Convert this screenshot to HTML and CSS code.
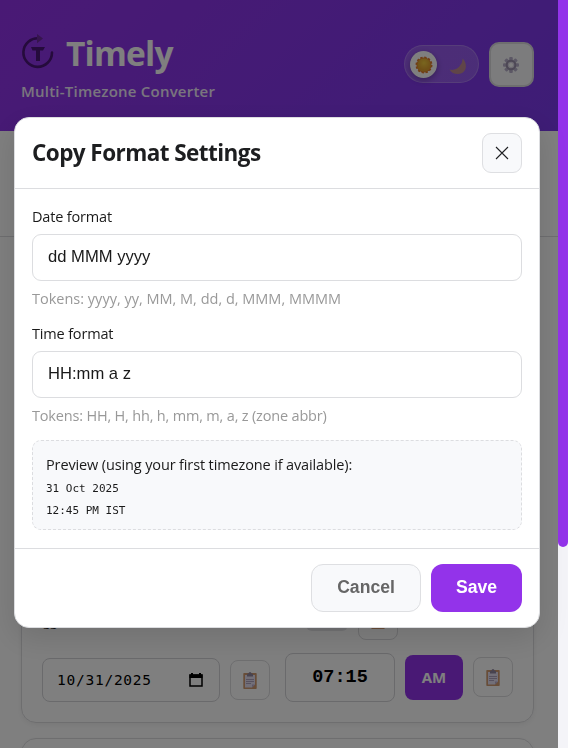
FILE: index.html
```html
<!DOCTYPE html>
<html lang="en">
<head>
<meta charset="utf-8">
<title>Timely</title>
<link rel="stylesheet" href="styles.css">
</head>
<body>
<svg width="0" height="0" class="defs">
  <defs>
    <symbol id="clipboard" viewBox="0 0 14 17">
      <rect x="0.3" y="1" width="13.4" height="16" rx="0.8" fill="#d09a70"/>
      <path d="M2 3h10v9.5L9 15.500H2z" fill="#e4def0"/>
      <path d="M12 12.500L9 15.500V12.500z" fill="#b9adcf"/>
      <path d="M4 4.500V2.500Q4 1.500 5.500 1.500Q5.700 0 7 0T8.500 1.500Q10 1.500 10 2.500V4.500z" fill="#91869f"/>
      <path d="M3 7.500h8M3 9.500h8M3 11.500h5" stroke="#a79bb8" stroke-width="0.9"/>
    </symbol>
  </defs>
</svg>
<div class="viewport">
  <div class="page">
    <header class="topbar">
      <div class="brand">
        <div class="brand-row">
          <svg class="logo" width="34" height="36" viewBox="0 0 34 36" fill="none">
            <path d="M18 5.300A14.300 14.300 0 1 0 31 19.500" stroke="#4a1678" stroke-width="2.600" stroke-linecap="round"/>
            <path d="M16 1L22 5.500L16 10.300z" fill="#6c2b9c"/>
            <path d="M10 14h14l-2 3.500H19V28h-4V17.500h-3.500z" fill="#4a1678"/>
          </svg>
          <h1 class="name">Timely</h1>
        </div>
        <p class="tagline">Multi-Timezone Converter</p>
      </div>
      <div class="actions">
        <div class="theme">
          <span class="knob">
            <svg width="18" height="18" viewBox="0 0 18 18">
              <defs><radialGradient id="sun" cx=".5" cy=".35"><stop offset="0" stop-color="#f2cc3e"/><stop offset="1" stop-color="#dfa02f"/></radialGradient></defs>
              <circle cx="9" cy="9" r="7.500" fill="#e07a2c" stroke="#e07a2c" stroke-width="2" stroke-dasharray="2.300 1.627"/>
              <circle cx="9" cy="9" r="6.800" fill="url(#sun)"/>
            </svg>
          </span>
          <svg class="moon" width="18" height="17" viewBox="0 0 18 17"><path d="M13.500.5C19 5 18 16 9 16Q3 16 .5 11.500Q6 13 10 9T13.500.5z" fill="#c08a91"/></svg>
        </div>
        <div class="gear">
          <svg width="18" height="18" viewBox="-9 -9 18 18">
            <g fill="#b9b0cb">
              <rect x="-1.800" y="-8" width="3.600" height="16" rx="1"/>
              <rect x="-1.800" y="-8" width="3.600" height="16" rx="1" transform="rotate(45)"/>
              <rect x="-1.800" y="-8" width="3.600" height="16" rx="1" transform="rotate(90)"/>
              <rect x="-1.800" y="-8" width="3.600" height="16" rx="1" transform="rotate(135)"/>
            </g>
            <circle r="4.300" fill="#ddd6e6" stroke="#9a90aa" stroke-width="2"/>
            <circle r="2" fill="#fff"/>
          </svg>
        </div>
      </div>
    </header>
    <section class="toolbar"></section>
    <main class="cards">
      <article class="card">
        <div class="zone-row">
          <span class="zone">gg</span>
          <span class="chip"></span>
          <span class="copy"><svg width="14" height="17"><use href="#clipboard"/></svg></span>
        </div>
        <div class="time-row">
          <div class="date"><span>10/31/2025</span>
            <svg width="14" height="14" viewBox="0 0 14 14"><path d="M1 2h12v11H1z" fill="none" stroke="#000" stroke-width="1.500"/><path d="M.5 1.500h13V5H.5zM2 0h2v2H2zM10 0h2v2h-2z"/></svg>
          </div>
          <span class="copy date-copy"><svg width="14" height="17"><use href="#clipboard"/></svg></span>
          <div class="time">07:15</div>
          <div class="ampm">AM</div>
          <span class="copy time-copy"><svg width="14" height="17"><use href="#clipboard"/></svg></span>
        </div>
      </article>
      <article class="card next"></article>
    </main>
  </div>
  <div class="track"><div class="thumb"></div></div>
</div>
<div class="overlay">
  <div class="modal">
    <div class="modal-head">
      <h2>Copy Format Settings</h2>
      <button class="close"><svg width="14" height="14" viewBox="0 0 14 14"><path d="M1 1l12 12M13 1L1 13" stroke="#1f2023" stroke-width="1.100"/></svg></button>
    </div>
    <div class="modal-body">
      <label class="label">Date format</label>
      <div class="input">dd MMM yyyy</div>
      <div class="hint">Tokens: yyyy, yy, MM, M, dd, d, MMM, MMMM</div>
      <label class="label">Time format</label>
      <div class="input">HH:mm a z</div>
      <div class="hint time-hint">Tokens: HH, H, hh, h, mm, m, a, z (zone abbr)</div>
      <div class="preview">
        <div class="preview-title">Preview (using your first timezone if available):</div>
        <div class="mono">31 Oct 2025</div>
        <div class="mono">12:45 PM IST</div>
      </div>
    </div>
    <div class="modal-foot">
      <button class="btn cancel">Cancel</button>
      <button class="btn save">Save</button>
    </div>
  </div>
</div>
</body>
</html>
```
FILE: styles.css
```css
* { box-sizing: border-box; }
body { margin: 0; height: 748px; overflow: hidden; font-family: "Open Sans", "Noto Sans", sans-serif; color: #1a1a1a; }
.defs { position: absolute; }
h1, h2, p { margin: 0; }
svg { display: block; flex: none; }
.viewport { display: flex; height: 748px; }
.page { width: 558px; height: 748px; overflow: hidden; background: #fefefe; }
.track { width: 10px; background: #f4f4f8; }
.thumb { height: 547px; border-radius: 0 0 5px 5px; background: #9333ea; }

.topbar { height: 131px; padding: 31px 24px 0 21px; display: flex; justify-content: space-between; background: linear-gradient(135deg, #9333ea, #7c3aed); color: #fff; }
.brand-row { display: flex; align-items: center; height: 44px; gap: 11px; }
.logo { margin-top: -4px; }
.name { font-size: 33.500px; line-height: 44px; font-weight: 700; letter-spacing: -0.8px; }
.tagline { margin-top: 5px; font-size: 15px; line-height: 22px; font-weight: 600; opacity: .9; letter-spacing: 0.22px; }
.actions { display: flex; gap: 10px; padding-top: 11px; }
.theme { margin-top: 3px; width: 75px; height: 38px; border: 1px solid rgba(255,255,255,.2); border-radius: 19px; background: rgba(255,255,255,.18); display: flex; align-items: center; padding: 0 5px; justify-content: space-between; }
.knob { width: 27px; height: 27px; border-radius: 50%; background: #fff; display: grid; place-items: center; padding-top: 2px; box-shadow: 0 2px 6px rgba(0,0,0,.3); }
.moon { margin: 5px 6px 0 0; }
.gear { width: 45px; height: 45px; border: 2px solid #dcdcdf; border-radius: 10px; background: #f8f9fb; display: grid; place-items: center; padding: 1px 2px 0 0; }

.toolbar { height: 106px; border-bottom: 1px solid #dcdcdf; }
.cards { padding: 264px 24px 0 21px; display: grid; gap: 15px; }
.card { height: 222px; border: 1px solid #dcdcdf; border-radius: 15px; padding: 98px 20px 20px; box-shadow: 0 2px 4px rgba(0,0,0,.05); }
.next { height: 80px; }
.zone-row { display: flex; align-items: flex-end; height: 40px; }
.zone { width: 264px; padding: 0 0 8px 1px; font-size: 13px; line-height: 22px; }
.chip { width: 42px; height: 28px; border-radius: 6px; margin: 0 10px 9px 0; background: #e5e5e8; }
.copy { width: 40px; height: 40px; border: 1px solid #dcdcdf; border-radius: 8px; display: grid; place-items: center; }
.time-row { display: flex; align-items: flex-end; height: 62px; }
.date { width: 178px; height: 44px; border: 1px solid #d4d4d8; border-radius: 8px; padding: 0 16px 0 14px; display: flex; align-items: center; justify-content: space-between; font: 14.500px "DejaVu Sans Mono", monospace; letter-spacing: .75px; color: #000; }
.date-copy { margin: 0 15px 2px 10px; }
.time { width: 110px; height: 49px; border: 1px solid #d4d4d8; border-radius: 8px; text-align: center; font: 700 18.500px/47px "Liberation Mono", monospace; color: #000; }
.ampm { width: 58px; height: 45px; margin: 0 10px 2px; border-radius: 8px; background: #9333ea; color: #fff; text-align: center; font-size: 15px; line-height: 45px; font-weight: 700; }
.time-copy { margin-bottom: 5px; }

.overlay { position: fixed; inset: 0 10px 0 0; padding: 117px 18px 0 14px; background: rgba(0,0,0,.5); }
.modal { width: 526px; height: 511px; background: #fff; border: 1px solid #dcdde0; border-radius: 15px; box-shadow: 0 10px 30px rgba(0,0,0,.12); }
.modal-head { height: 71px; border-bottom: 1px solid #dcdde0; padding: 0 17px; display: flex; align-items: center; justify-content: space-between; }
h2 { font-size: 22.500px; font-weight: 700; line-height: 32px; letter-spacing: -0.56px; color: #1d1e20; }
button { padding: 0; }
.close { width: 40px; height: 40px; border: 1px solid #dedfe2; border-radius: 9px; background: #f8f9fb; display: grid; place-items: center; }
.modal-body { height: 359px; padding: 17px 17px 0; }
.label { display: block; height: 28px; font-size: 14.500px; line-height: 22px; letter-spacing: -.17px; }
.input { height: 47px; border: 1px solid #dcdde0; border-radius: 9px; padding: 0 15px; font: 16.600px/43px "Liberation Sans", sans-serif; }
.hint { height: 42px; padding-top: 7px; font-size: 14.500px; line-height: 22px; color: #999; white-space: nowrap; }
.time-hint { letter-spacing: -.18px; }
.preview { height: 90px; border: 1px dashed #dcdde0; border-radius: 9px; background: #f8f9fb; padding: 13px; }
.preview-title { height: 24px; font-size: 14.500px; line-height: 22px; white-space: nowrap; letter-spacing: -.13px; }
.mono { font: 11px/22px "DejaVu Sans Mono", monospace; }
.modal-foot { height: 79px; border-top: 1px solid #dcdde0; display: flex; gap: 10px; padding: 15px 17px 0; justify-content: flex-end; }
.btn { height: 48px; border-radius: 12px; font: 700 17.600px "Liberation Sans", sans-serif; padding-bottom: 2px; }
.cancel { width: 110px; background: #f8f9fb; border: 1px solid #dedfe2; color: #666; }
.save { width: 91px; background: #9333ea; border: 0; color: #fff; }
```
